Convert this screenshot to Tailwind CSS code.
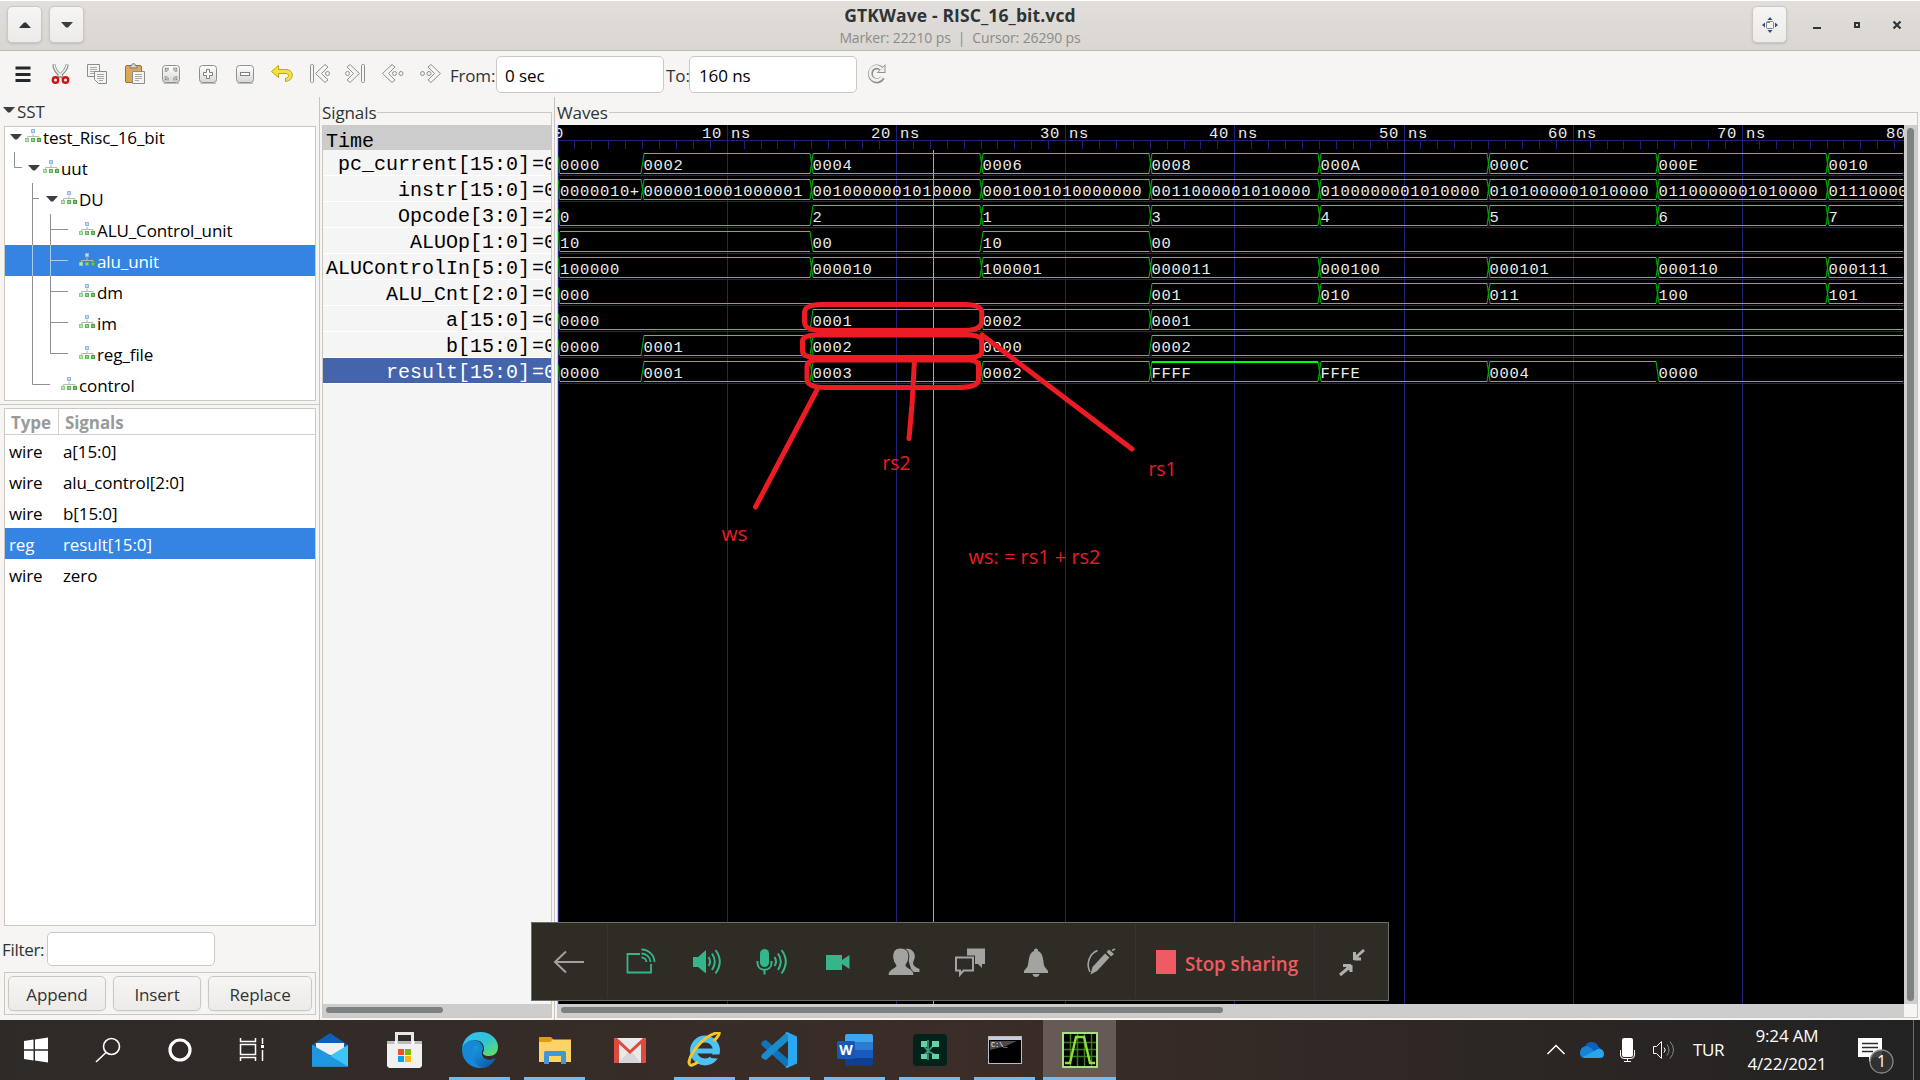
<!DOCTYPE html>
<html lang="en">
<head>
<meta charset="utf-8">
<title>GTKWave - RISC_16_bit.vcd</title>
<script src="https://cdn.jsdelivr.net/npm/@tailwindcss/browser@4"></script>
</head>
<body class="relative flex flex-col w-[1920px] h-[1080px] overflow-hidden bg-[#f6f5f3] text-[#2e3436] font-['Open_Sans','Noto_Sans',sans-serif] text-[17px] tracking-[-0.1px]">

<svg class="absolute" width="0" height="0">
  <defs>
    <linearGradient id="mt" x1="0" y1="0" x2="0" y2="1"><stop offset="0" stop-color="#fff"/><stop offset="1" stop-color="#d6d6d6"/></linearGradient>
    <linearGradient id="cloud" x1="0" y1="0" x2="1" y2="1"><stop offset="0" stop-color="#35c1f1"/><stop offset=".5" stop-color="#2fc3d8"/><stop offset="1" stop-color="#6be34f"/></linearGradient>
    <linearGradient id="deep" x1="0" y1="0" x2="1" y2="1"><stop offset="0" stop-color="#1b9de2"/><stop offset="1" stop-color="#0c4da2"/></linearGradient>
  </defs>
  <symbol id="hier" viewBox="0 0 16 14">
    <path d="M8 4.500V7M2.500 9V7.500H14V9" fill="none" stroke="#b8b8b8"/>
    <rect x="6" y="0" width="4" height="4" fill="#8fb9e8"/><rect x="7" y="1" width="2" height="2" fill="#c3dbf5"/>
    <rect x="0" y="9" width="4" height="4" fill="#8fcf85"/><rect x="1" y="10" width="2" height="2" fill="#b9e6b0"/>
    <rect x="6" y="9" width="4" height="4" fill="#5db654"/><rect x="7" y="10" width="2" height="2" fill="#93d68b"/>
    <rect x="12" y="9" width="4" height="4" fill="#4ba343"/><rect x="13" y="10" width="2" height="2" fill="#7cc775"/>
  </symbol>
  <symbol id="tri" viewBox="0 0 12 6"><path d="M0 0H12L7 5.500H5Z" fill="#3a3e40"/></symbol>
</svg>

<!-- title bar -->
<header class="flex h-[51px] shrink-0 items-start border-t border-b border-t-white border-b-[#bfb8b1] bg-linear-to-b from-[#e1dedb] to-[#dad6d2] pt-[5px] pl-[7px]">
  <div class="flex h-[37px] w-[35px] items-center justify-center rounded-[5px] border border-[#cdc7c2] bg-linear-to-b from-[#f6f5f4] to-[#edebe9] shadow-sm"><svg width="12" height="6" viewBox="0 0 12 6"><path d="M0 6H12L7 .500H5Z" fill="#2e3436"/></svg></div>
  <div class="ml-[7px] flex h-[37px] w-[35px] items-center justify-center rounded-[5px] border border-[#cdc7c2] bg-linear-to-b from-[#f6f5f4] to-[#edebe9] shadow-sm"><svg width="12" height="6"><use href="#tri"/></svg></div>
  <div class="-mt-[1px] flex-1 pl-[84px] text-center">
    <div class="text-[17.5px] leading-[20px] font-bold tracking-[0.12px]">GTKWave - RISC_16_bit.vcd</div>
    <div class="mt-[4px] text-[14px] leading-[18px] tracking-[-0.12px] text-[#8b8c8a]">Marker: 22210 ps&nbsp; |&nbsp; Cursor: 26290 ps</div>
  </div>
  <div class="flex h-[37px] w-[35px] items-center justify-center rounded-[5px] border border-[#cdc7c2] bg-linear-to-b from-[#f6f5f4] to-[#edebe9] shadow-sm">
    <svg width="16" height="16" viewBox="0 0 16 16"><path d="M8 0L10.500 3H5.500ZM8 16L5.500 13H10.500ZM0 8L3 5.500V10.500ZM16 8L13 10.500V5.500Z" fill="#27508f"/><rect x="4.500" y="4.500" width="7" height="7" rx="1" fill="#f2f2ef" stroke="#83847f"/><path d="M5 5.500h3" stroke="#83847f"/></svg>
  </div>
  <svg class="ml-[20px] h-[30px] w-[113px] shrink-0" viewBox="1807 6 113 30"><rect x="1813" y="27" width="8" height="2" fill="#2e3436"/><rect x="1855" y="23" width="4" height="4" fill="none" stroke="#2e3436" stroke-width="2"/><path d="M1893.500 21.500L1900.500 28.500M1900.500 21.500L1893.500 28.500" stroke="#2e3436" stroke-width="2.200"/></svg>
</header>

<!-- toolbar -->
<div class="flex h-[46px] shrink-0 items-center">
  <svg class="h-[46px] w-[450px] shrink-0" viewBox="0 51 450 46" fill="none">
    <path d="M15.500 68H30.500M15.500 74.500H30.500M15.500 80.500H30.500" stroke="#24282a" stroke-width="3"/>
    <g><path d="M54 64.500C54 69 58 74 62.500 77M67 64.500C67 69 62 74 58 77" stroke="#8b8d89" stroke-width="3.400"/><path d="M54.300 65C54.500 69 58 73.500 62 76M66.700 65C66.500 69 62 73.500 58.500 76" stroke="#eceeec" stroke-width="1.600"/><circle cx="55.500" cy="80" r="2.700" stroke="#cc1414" stroke-width="2.400"/><circle cx="65.500" cy="80" r="2.700" stroke="#cc1414" stroke-width="2.400"/></g>
    <g stroke="#8b8d89"><path d="M87.500 64.500H99.500V76.500H87.500Z" fill="#f4f4f2"/><path d="M90 67.500H97M90 69.500H97M90 71.500H97M90 73.500H94" stroke="#a9aaa6"/><path d="M94.500 71.500H106.500V83.500H98.500L94.500 79.500Z" fill="#f4f4f2"/><path d="M97 74.500H104M97 76.500H104M97 78.500H104M99 80.500H103" stroke="#a9aaa6"/></g>
    <g><rect x="125.500" y="65.500" width="16" height="17" rx="1.500" fill="#dda75a" stroke="#a56d26"/><path d="M130 68V65.500H131.500C131.500 63 135.500 63 135.500 65.500H137V68Z" fill="#d2d3d0" stroke="#75777a"/><path d="M132.500 71.500H144.500V83.500H132.500Z" fill="#f4f4f2" stroke="#8b8d89"/><path d="M135 74.500H142M135 76.500H142M135 78.500H142M135 80.500H139" stroke="#a9aaa6"/></g>
    <g fill="url(#mt)" stroke="#8f918d"><rect x="162.500" y="65.500" width="17" height="17" rx="3"/><rect x="199.500" y="65.500" width="17" height="17" rx="3"/><rect x="236.500" y="65.500" width="17" height="17" rx="3"/></g>
    <path d="M163.500 83.500H179M200.500 83.500H216M237.500 83.500H253" stroke="#bcbdb9"/>
    <path d="M166 72V69H169M173 69H176V72M176 76V79H173M169 79H166V76" stroke="#7e807c" stroke-width="2.400"/><path d="M166 72V69H169M173 69H176V72M176 76V79H173M169 79H166V76" stroke="#f5f5f5" stroke-width=".8"/>
    <path d="M206.500 69.500H209.500V72.500H212.500V75.500H209.500V78.500H206.500V75.500H203.500V72.500H206.500Z" fill="#fbfbfb" stroke="#7e807c"/>
    <rect x="240.500" y="72.500" width="9" height="3" fill="#fbfbfb" stroke="#7e807c"/>
    <path d="M271.500 71.500L278.500 65.500V69.500H286C294 69.500 295 80.500 285.500 81.500V78.500C290 77.500 289 73.500 286 73.500H278.500V77.500Z" fill="#f4e14a" stroke="#c0a21b"/>
    <g stroke="#8f918d" fill="#f5f5f4">
      <rect x="310.500" y="64.500" width="3" height="18" rx="1"/><path d="M315.500 73.500L325 64.500L328 67L321.500 73.500L328 80L325 82.500Z"/><circle cx="327.500" cy="73.500" r="2"/>
      <circle cx="347.500" cy="73.500" r="2"/><path d="M359.500 73.500L350 64.500L347 67L353.500 73.500L347 80L350 82.500Z"/><rect x="361.500" y="64.500" width="3" height="18" rx="1"/>
      <path d="M382.500 73.500L392 64.500L395 67L388.500 73.500L395 80L392 82.500Z"/><circle cx="394.500" cy="73.500" r="2"/><circle cx="401" cy="73.500" r="2"/>
      <circle cx="422.500" cy="73.500" r="2"/><circle cx="429" cy="73.500" r="2"/><path d="M440.500 73.500L431 64.500L428 67L434.500 73.500L428 80L431 82.500Z"/>
    </g>
  </svg>
  <span class="w-[46px] pt-[3px] tracking-[-0.2px]">From:</span>
  <div class="flex h-[37px] w-[168px] items-center rounded-[5px] border border-[#cdc7c2] bg-white pl-2 pt-[3px] text-black">0 sec</div>
  <span class="w-[25px] pl-[2px] pt-[3px]">To:</span>
  <div class="flex h-[37px] w-[168px] items-center rounded-[5px] border border-[#cdc7c2] bg-white pl-[9px] pt-[3px] text-black">160 ns</div>
  <svg class="ml-[9px]" width="22" height="22" viewBox="0 0 22 22"><path d="M16.500 14.500A6.500 7 0 1 1 15 5.500" fill="none" stroke="#8f918d" stroke-width="5"/><path d="M19.500 1V10H10.500L13.500 7" fill="#8f918d"/><path d="M16 14A6.500 7 0 1 1 15.500 6" fill="none" stroke="#f1f1f0" stroke-width="2.800"/><path d="M18.500 3V9H12.500Z" fill="#f1f1f0"/></svg>
</div>

<!-- panes -->
<main class="flex h-[923px] shrink-0">
  <!-- SST pane -->
  <section class="flex w-[320px] shrink-0 flex-col border-r border-[#c9c3be]">
    <div class="flex h-[29px] items-center pl-[3px]"><svg class="mt-[-3px]" width="12" height="6"><use href="#tri"/></svg><span class="ml-[2px]">SST</span></div>
    <div class="relative ml-[4px] h-[275px] w-[312px] overflow-hidden border border-[#cdc7c2] bg-white text-black">
      <div id="tree" class="-mt-[6px]"></div>
      <svg class="absolute inset-0" width="310" height="273" viewBox="5 127 310 273" fill="none" stroke="#8f9090"><path d="M14.500 152V167.500H22M32.500 183V384.500H50M32.500 198.500H39M50.500 214V353.500H68M50.500 229.500H68M50.500 291.500H68M50.500 322.500H68"/><path d="M32.500 245V276M50.500 245V276M50.500 260.500H68" stroke="#a8cbf4"/></svg>
    </div>
    <div class="mt-[3px] h-px bg-[#cdc7c2]"></div>
    <div class="mt-[3px] ml-[4px] h-[518px] w-[312px] border border-[#cdc7c2] bg-white text-black">
      <div class="flex h-[26px] items-center border-b border-[#d5d0cc] text-[17px] font-bold text-[#999b9b]"><span class="flex h-full w-[54px] items-center border-r border-[#d5d0cc] pt-[3px] pl-[6px]">Type</span><span class="pl-[6px] pt-[3px]">Signals</span></div>
      <div id="vars"></div>
    </div>
    <div class="mt-[6px] flex h-[34px] items-center"><span class="w-[47px] pl-[2px] pt-[1px] tracking-[-0.3px]">Filter:</span><div class="h-full w-[168px] rounded-[5px] border border-[#cdc7c2] bg-white"></div></div>
    <div class="mt-[6px] ml-[4px] flex h-[43px] w-[312px] gap-[7px] border border-[#cdc7c2] px-[3px] pt-[3px]">
      <div class="flex h-[35px] w-[98px] items-center justify-center rounded-[5px] border border-[#cdc7c2] bg-linear-to-b from-[#f6f5f4] to-[#edebe9] pt-[2px] shadow-xs">Append</div>
      <div class="flex h-[35px] w-[88px] items-center justify-center rounded-[5px] border border-[#cdc7c2] bg-linear-to-b from-[#f6f5f4] to-[#edebe9] pt-[2px] shadow-xs">Insert</div>
      <div class="flex h-[35px] w-[104px] items-center justify-center rounded-[5px] border border-[#cdc7c2] bg-linear-to-b from-[#f6f5f4] to-[#edebe9] pt-[2px] shadow-xs">Replace</div>
    </div>
  </section>

  <!-- signal names -->
  <section class="flex w-[235px] shrink-0 flex-col border-r border-[#c9c3be] pl-[2px]">
    <div class="flex h-[28px] w-[230px] items-start"><span class="mt-[5px] leading-[22px]">Signals</span><div class="mt-[15px] ml-[1px] h-[13px] flex-1 border-t border-r border-[#cdc7c2]"></div></div>
    <div class="flex h-[893px] w-[230px] flex-col overflow-hidden border-x border-b border-[#cdc7c2] bg-[#f5f5f5] font-['Liberation_Mono',monospace] text-[20px] tracking-normal text-black">
      <div class="h-[25px] bg-[#cccccc] pl-[3px] leading-[34px]">Time</div>
      <div id="names"></div>
      <div class="mt-auto h-[13px] shrink-0 bg-[#cdcdcd] pt-[3px] pl-[3px]"><div class="h-[6px] w-[117px] rounded-full bg-[#7e8182]"></div></div>
    </div>
  </section>

  <!-- waves -->
  <section class="flex w-[1365px] flex-col pl-[2px]">
    <div class="flex h-[28px] w-[1361px] items-start"><span class="mt-[5px] leading-[22px]">Waves</span><div class="mt-[15px] ml-[1px] h-[13px] flex-1 border-t border-r border-[#cdc7c2]"></div></div>
    <div class="flex h-[879px] w-[1361px] border-x border-[#cdc7c2]">
      <svg id="wave" class="shrink-0 bg-black" width="1346" height="879" viewBox="558 125 1346 879"></svg>
      <div class="flex-1 bg-[#cdcdcd] pt-[3px] pl-[3px]"><div class="h-[873px] w-[7px] rounded-full bg-[#7e8182]"></div></div>
    </div>
    <div class="h-[14px] w-[1361px] border-x border-b border-[#cdc7c2]"><div class="h-[13px] w-[1346px] bg-[#cdcdcd] pt-[3px] pl-[3px]"><div class="h-[6px] w-[662px] rounded-full bg-[#7e8182]"></div></div></div>
  </section>
</main>

<!-- screen-share controls floating over the window -->
<div class="absolute top-[922px] left-[531px] flex h-[79px] w-[858px] items-stretch border border-[#6f6d68] bg-[#2f2c26]">
  <svg class="h-[76px] w-[783px] shrink-0" viewBox="532 923 783 76" fill="none">
    <path d="M607.500 924V998M1135.500 924V998M1314.500 924V998" stroke="#37342f"/>
    <path d="M584 962H555M566 951.500L555 962L566 972.500" stroke="#a3a19d" stroke-width="2"/>
    <g stroke="#35b58c" stroke-width="1.800"><path d="M640 954H627.500V972.500H651V964"/><path d="M641.500 957.500A5 5 0 0 1 646.500 962M641.500 953.500A9 9 0 0 1 650.500 962M641.500 949.500A13 13 0 0 1 654.500 962"/></g>
    <path d="M693 957H698L706 950V973.500L698 967H693Z" fill="#35b58c"/><path d="M708.500 957Q711.500 961.500 708.500 966M712 953.500Q717.500 961.500 712 970M715.500 950Q724 961.500 715.500 973.500" stroke="#35b58c" stroke-width="2"/>
    <rect x="760" y="949" width="9" height="18" rx="4.500" fill="#35b58c"/><path d="M757.500 961V963C757.500 972 771.500 972 771.500 963V961M764.500 969V974.500" stroke="#35b58c" stroke-width="2"/><path d="M774.500 957Q777.500 961.500 774.500 966M778 953.500Q783.500 961.500 778 970M781.500 950Q790 961.500 781.500 973.500" stroke="#35b58c" stroke-width="2"/>
    <path d="M826 955H842V960L849.500 955V969L842 964V970H826Z" fill="#35b58c"/>
    <path d="M905 949C912 947 917 954 914 960C912 964 913 966 919.500 969V972H912Z" fill="#a3a3a2"/><path d="M900.500 948C908 948 909.500 954 908.500 959C908 963 905.500 964 906 966C907 968 914 969 914 975.500H888C888 969 895.500 968 896 966C896 964 893.500 963 893 959C892 954 893.500 948 900.500 948Z" fill="#a3a3a2" stroke="#2f2c26"/>
    <path d="M967 948.500H985V964H982V968L978 964H967Z" fill="#a3a3a2"/><path d="M955.500 957.500H973V970.500H963.500L960 974.500V970.500H955.500Z" fill="#2f2c26" stroke="#2f2c26" stroke-width="4"/><path d="M956 957.500H973V970.500H963.500L960 974.500V970.500H956Z" fill="#2f2c26" stroke="#a3a3a2" stroke-width="2"/>
    <path d="M1036 948.500C1037.500 948.500 1038 949.500 1038 951C1044 953 1043 963 1044.500 966.500L1048 971V973H1024V971L1027.500 966.500C1029 963 1028 953 1034 951C1034 949.500 1034.500 948.500 1036 948.500ZM1032.500 974H1039.500C1039 978 1033 978 1032.500 974Z" fill="#a3a3a2"/>
    <path d="M1097.500 950.500C1089 954 1086 964 1090 972" stroke="#a3a3a2" stroke-width="1.600"/><path d="M1090.500 974.500L1092.500 967L1105 953.500L1109.500 957.500L1097 971Z" fill="#a3a3a2"/><path d="M1106.500 952L1109 949.500L1114 954L1111 956.500Z" fill="#a3a3a2"/><path d="M1112 950.500L1115 949" stroke="#a3a3a2" stroke-width="1.500"/>
    <rect x="1156" y="950" width="20" height="24" fill="#ef5b62"/>
    <text x="1185" y="970.500" textLength="113" lengthAdjust="spacingAndGlyphs" font-size="19" font-weight="600" fill="#ef5b62" letter-spacing="0">Stop sharing</text>
  </svg>
  <svg class="h-[76px] flex-1" viewBox="1315 923 73 76"><g fill="#b0afac" stroke="#b0afac" stroke-width="3"><path d="M1354.500 960V952M1354.500 959H1361M1355 958L1364 950" fill="none"/><path d="M1354 960V953L1361 960Z" stroke="none"/><path d="M1351 965V972M1351 965.500H1343M1350 966.500L1340 975" fill="none"/><path d="M1351 964V972L1343 964Z" stroke="none"/></g></svg>
</div>

<!-- taskbar -->
<footer class="flex h-[60px] shrink-0 items-stretch bg-linear-to-r from-[#2d2a28] via-[#3b2d27] to-[#222222] text-white">
  <svg class="w-[292px] shrink-0" viewBox="0 1020 292 60" fill="none" stroke="#fff">
    <path d="M24 1041L33.500 1039.600V1049.300H24ZM35 1039.400L48 1037.500V1049.300H35ZM24 1050.700H33.500V1060.400L24 1059ZM35 1050.700H48V1062.500L35 1060.600Z" fill="#fff" stroke="none"/>
    <circle cx="111.500" cy="1046.500" r="8" stroke-width="1.600"/><path d="M106 1052.500L96 1062" stroke-width="1.600"/>
    <circle cx="180" cy="1050" r="10" stroke-width="3.200"/>
    <path d="M240.500 1038V1041.500H255.500V1038M240.500 1061V1057.500H255.500V1061M240.500 1044.500H255.500V1054.500H240.500ZM262.500 1038V1044M262.500 1050V1061" stroke-width="1.500"/><rect x="261" y="1045" width="3" height="3" fill="#fff" stroke="none"/>
  </svg>
  <div id="apps" class="flex shrink-0">
    <div class="flex w-[75px] items-center justify-center"><svg width="36" height="34" viewBox="0 0 36 34"><path d="M0 12L18 0L36 12V20H0Z" fill="#0f5fb5"/><path d="M4 10H32V22H4Z" fill="#f0f0f0"/><path d="M0 12L18 22L0 33Z" fill="#27a3e6"/><path d="M36 12L0 33.500H36Z" fill="#3cc5f5"/><path d="M0 12L36 33.500H0Z" fill="#1f96e0"/></svg></div>
    <div class="flex w-[75px] items-center justify-center"><svg width="36" height="36" viewBox="0 0 36 36"><path d="M9.500 12V1.500H25.500V12" fill="none" stroke="#e8e8e8" stroke-width="3"/><path d="M0 9H35V34L33 36H2L0 34Z" fill="#f1f1f1"/><path d="M0 9H35V12H0Z" fill="#bdbdbd"/><path d="M9 9V12M26 9V12" stroke="#fff" stroke-width="3"/><rect x="11" y="17" width="6" height="6" fill="#f25022"/><rect x="18" y="17" width="6" height="6" fill="#7fba00"/><rect x="11" y="24" width="6" height="6" fill="#00a4ef"/><rect x="18" y="24" width="6" height="6" fill="#ffb900"/></svg></div>
    <div class="relative flex w-[75px] items-center justify-center"><svg width="36" height="36" viewBox="0 0 36 36"><path d="M0 18C0 12 5 8 11 8C18 8 21 13 21 17C18 22 21 28 27 28C30 28 32 27 33.500 26.500C30 32 25 36 18 36C8 36 0 28 0 18Z" fill="#1688d8"/><path d="M13 14C8 20 10 32 20 36C26 36 31 31 33.500 26.500C27 30 16 27 17 18C17 16 15 13 13 14Z" fill="url(#deep)"/><path d="M0 17C1 6 9 0 18 0C30 0 36 8 36 15C36 21 32 24 27 24C22 24 20.500 22 21 20.500C23 18 23 8 12 8C6 8 1 12 0 17Z" fill="url(#cloud)"/></svg><i class="absolute bottom-0 left-[7px] h-[3px] w-[61px] bg-[#76b9ed]"></i></div>
    <div class="relative flex w-[75px] items-center justify-center"><svg width="32" height="28" viewBox="0 0 32 28"><path d="M0 1H12L15 4H30V10H0Z" fill="#e39b0a"/><path d="M0 6H11L14 3.500H32V26H0Z" fill="#fdd266"/><path d="M5 28V17C5 15.500 6 15 7 15H25C26 15 27 15.500 27 17V28H22V20H10V28Z" fill="#3e97db"/></svg><i class="absolute bottom-0 left-[7px] h-[3px] w-[61px] bg-[#76b9ed]"></i></div>
    <div class="flex w-[75px] items-center justify-center"><svg width="32" height="25" viewBox="0 0 32 25"><rect width="32" height="25" rx="2" fill="#e9e9e9"/><path d="M5 25L16 12L27 25Z" fill="#d6d6d6"/><path d="M0 2C0 0 2 0 3 0L16 12L29 0C30 0 32 0 32 2V23C32 25 31 25 27 25V6L16 16L5 6V25C1 25 0 25 0 23Z" fill="#dd4b3e"/></svg></div>
    <div class="relative flex w-[75px] items-center justify-center"><svg width="36" height="36" viewBox="0 0 36 36"><circle cx="18" cy="18.500" r="11.500" fill="none" stroke="#4cc3f3" stroke-width="7"/><path d="M9 19H32" stroke="#4cc3f3" stroke-width="5"/><path d="M22 22.500H36V27L24 26Z" fill="#372c28"/><path d="M27 9C36 -1 33 -1 24 3C14 8 3 22 2 30C2 36 8 32 11 30" fill="none" stroke="#f6c72b" stroke-width="3"/></svg><i class="absolute bottom-0 left-[7px] h-[3px] w-[61px] bg-[#76b9ed]"></i></div>
    <div class="relative flex w-[75px] items-center justify-center"><svg width="37" height="36" viewBox="0 0 37 36"><path d="M2 9L5 8L28 28V35L26 36L1 13.500C0 12 0 10.500 2 9Z" fill="#1075b8"/><path d="M2 27L5 28L28 8V1L26 0L1 22.500C0 24 0 25.500 2 27Z" fill="#1b8bd0"/><path d="M26 0L36 4.500V31.500L26 36L24 35L27 33V3L24 1Z" fill="#2aa7f0"/></svg><i class="absolute bottom-0 left-[7px] h-[3px] w-[61px] bg-[#76b9ed]"></i></div>
    <div class="relative flex w-[75px] items-center justify-center"><svg width="36" height="32" viewBox="0 0 36 32"><path d="M8 2Q8 0 10 0H34Q36 0 36 2V8H8Z" fill="#41a5ee"/><path d="M8 8H36V16H8Z" fill="#2b7cd3"/><path d="M8 16H36V24H8Z" fill="#185abd"/><path d="M8 24H36V30Q36 32 34 32H10Q8 32 8 30Z" fill="#103f91"/><rect y="7" width="18" height="18" rx="1.500" fill="#1857b5"/><text x="9" y="21" text-anchor="middle" font-size="14" font-weight="700" fill="#fff">W</text></svg><i class="absolute bottom-0 left-[7px] h-[3px] w-[61px] bg-[#76b9ed]"></i></div>
    <div class="relative flex w-[75px] items-center justify-center"><svg width="34" height="32" viewBox="0 0 34 32"><rect width="34" height="32" rx="4" fill="#03231a"/><path d="M15 17L9 10M15 17L23 9M15 17L9 23M15 17L24 22M15 6V26" stroke="#3f9c7c" stroke-width="1.600"/><path d="M8 7H14V13H8ZM19 7H26V13H19ZM8 20H14V25H8ZM19 20H26V25H19Z" fill="#62d3a8"/></svg><i class="absolute bottom-0 left-[7px] h-[3px] w-[61px] bg-[#76b9ed]"></i></div>
    <div class="relative flex w-[75px] items-center justify-center"><svg width="34" height="28" viewBox="0 0 34 28"><rect x=".5" y=".5" width="33" height="27" fill="#000" stroke="#b7bcc9"/><path d="M1 1H33V4H1Z" fill="#c9cdd7"/><path d="M2 5H29L18 10L2 14Z" fill="#4a4a4a"/><text x="3" y="11" font-size="7" fill="#fff" font-family="Liberation Mono">C:\_</text></svg><i class="absolute bottom-0 left-[7px] h-[3px] w-[61px] bg-[#76b9ed]"></i></div>
    <div class="relative ml-[1px] flex w-[73px] items-center justify-center bg-[#655a56]"><svg width="36" height="36" viewBox="0 0 36 36"><rect x="1" y="1" width="34" height="34" fill="#000" stroke="#a9e080" stroke-width="2"/><path d="M8.500 2V34M15.500 2V34M22.500 2V34M29.500 2V34M2 10.500H34M2 17.500H34M2 24.500H34" stroke="#3f7a18" stroke-width="1.500"/><path d="M3 31H8L14 5H22L28 31H33" fill="none" stroke="#8ae234" stroke-width="2.400"/></svg><i class="absolute bottom-0 left-0 h-[3px] w-[73px] bg-[#76b9ed]"></i></div>
  </div>
  <div class="flex-1"></div>
  <svg class="w-[150px] shrink-0" viewBox="1540 1020 150 60" fill="none" stroke="#fff">
    <path d="M1547.500 1054L1556 1045.500L1564.500 1054" stroke-width="1.500"/>
    <g stroke="none"><path d="M1585 1048C1585 1041 1596 1040 1598 1046L1603 1052H1583Z" fill="#0a62b8"/><path d="M1580 1053C1580 1047 1586 1044 1591 1048L1600 1058H1584C1581 1058 1580 1055 1580 1053Z" fill="#1583d8"/><path d="M1583 1057L1596 1050C1600 1047 1604 1050 1604 1054C1604 1057 1602 1058 1600 1058H1585Z" fill="#28a4ea"/><rect x="1622" y="1038" width="11" height="19" rx="2" fill="#fff"/></g>
    <path d="M1620.500 1050V1055Q1620.500 1058.500 1624 1058.500H1631Q1634.500 1058.500 1634.500 1055V1050M1627.500 1059V1062M1624 1061.500H1631"/>
    <path d="M1653.500 1046.500H1656.500L1661.500 1041.500V1058.500L1656.500 1053.500H1653.500Z"/><path d="M1664 1047.500Q1666.500 1050 1664 1052.500"/><path d="M1667 1044.500Q1671 1050 1667 1055.500M1670 1041.500Q1677 1050 1670 1058.500" stroke="#888"/>
  </svg>
  <div class="w-[40px] shrink-0 self-center pl-[3px] text-[17px] tracking-[-0.4px]">TUR</div>
  <div class="flex w-[114px] flex-col justify-center text-center text-[17px] leading-[28px] tracking-[-0.15px]"><span>9:24 AM</span><span>4/22/2021</span></div>
  <svg class="w-[76px] shrink-0" viewBox="1844 1020 76 60"><path d="M1858 1038H1882V1057H1874L1869 1062V1057H1858Z" fill="#fff"/><path d="M1862 1043.500H1878M1862 1047.500H1878M1862 1051.500H1873" stroke="#2b2b2b" stroke-width="1.500"/><circle cx="1881.500" cy="1061.500" r="11.500" fill="#333" fill-opacity=".9" stroke="#8a8a8a" stroke-width="1.300"/><text x="1881.500" y="1067" text-anchor="middle" font-size="16" fill="#fff">1</text><path d="M1913.500 1020V1080" stroke="#6b6b6b"/></svg>
</footer>

<script>
const tree = [[0,'test_Risc_16_bit',1],[1,'uut',1],[2,'DU',1],[3,'ALU_Control_unit'],[3,'alu_unit'],[3,'dm'],[3,'im'],[3,'reg_file'],[2,'control']];
document.getElementById('tree').innerHTML = tree.map(([d, n, open], i) =>
  `<div class="flex h-[31px] items-center ${i === 4 ? 'bg-[#3584e4] text-white' : ''}" style="padding-left:${5 + d * 18}px"><span class="w-[15px]">${open ? '<svg width="12" height="6"><use href="#tri"/></svg>' : ''}</span><svg class="-mt-[2px]" width="16" height="14"><use href="#hier"/></svg><span class="ml-[2px] pt-[2px]">${n}</span></div>`).join('');

const vars = [['wire','a[15:0]'],['wire','alu_control[2:0]'],['wire','b[15:0]'],['reg','result[15:0]'],['wire','zero']];
document.getElementById('vars').innerHTML = vars.map(([t, n], i) =>
  `<div class="flex h-[31px] items-center pl-[4px] pt-[2px] ${i === 3 ? 'bg-[#3584e4] text-white' : ''}"><span class="w-[54px]">${t}</span><span>${n}</span></div>`).join('');

// signal name, displayed value, then [start in ns, label] segments
const sig = [
  ['pc_current[15:0]','0',[[0,'0000'],[5,'0002'],[15,'0004'],[25,'0006'],[35,'0008'],[45,'000A'],[55,'000C'],[65,'000E'],[75,'0010']]],
  ['instr[15:0]','0',[[0,'0000010+'],[5,'0000010001000001'],[15,'0010000001010000'],[25,'0001001010000000'],[35,'0011000001010000'],[45,'0100000001010000'],[55,'0101000001010000'],[65,'0110000001010000'],[75,'0111000001010000']]],
  ['Opcode[3:0]','2',[[0,'0'],[15,'2'],[25,'1'],[35,'3'],[45,'4'],[55,'5'],[65,'6'],[75,'7']]],
  ['ALUOp[1:0]','0',[[0,'10'],[15,'00'],[25,'10'],[35,'00']]],
  ['ALUControlIn[5:0]','0',[[0,'100000'],[15,'000010'],[25,'100001'],[35,'000011'],[45,'000100'],[55,'000101'],[65,'000110'],[75,'000111']]],
  ['ALU_Cnt[2:0]','0',[[0,'000'],[35,'001'],[45,'010'],[55,'011'],[65,'100'],[75,'101']]],
  ['a[15:0]','0',[[0,'0000'],[15,'0001'],[25,'0002'],[35,'0001']]],
  ['b[15:0]','0',[[0,'0000'],[5,'0001'],[15,'0002'],[25,'0000'],[35,'0002']]],
  ['result[15:0]','0',[[0,'0000'],[5,'0001'],[15,'0003'],[25,'0002'],[35,'FFFF'],[45,'FFFE'],[55,'0004'],[65,'0000']]],
];
document.getElementById('names').innerHTML = sig.map(([n, v], i) =>
  `<div class="flex h-[26px] border-b border-white whitespace-pre leading-[30px] ${i === 8 ? 'bg-[#4464ac] text-white' : ''}"><span class="w-[207px] shrink-0 text-right">${n}</span><span class="ml-[2px]">=${v}</span></div>`).join('');

const X = t => Math.floor(558 + t * 16.92);
let s = '', blue = '';
for (let t = 0; t <= 79; t++) {
  const x = X(t) + .5;
  blue += t % 10 ? `M${x} 141V149` : `M${x} 125V1004`;
}
blue += 'M558 140.5H1904';
sig.forEach((_, r) => { blue += `M558 ${175.5 + r * 26}H1904`; });
s += `<path d="${blue}" stroke="#20207c" fill="none"/>`;
let bright = '', dark = '', thick = '', txt = '';
sig.forEach(([, , segs], r) => {
  const T = 153.5 + r * 26, B = 173.5 + r * 26;
  let prevTop = false;
  segs.forEach(([t, v], k) => {
    const x = X(t) + .5, last = k === segs.length - 1, x1 = last ? 1903 : X(segs[k + 1][0]) - 1;
    const top = /[^0]/.test(v);
    if (k === 0) dark += `M${x} ${top ? T : T + 4}L${x + 1} ${B}`;
    else {
      if (prevTop) dark += `M${x - 1.5} ${T}L${x + 1.5} ${B}`;
      if (top) dark += `M${x - 1.5} ${B}L${x + 1.5} ${T}`;
    }
    bright += `M${x + 1.5} ${B}H${x1}`;
    if (top) { if (v === 'FFFF') thick += `M${x + 1.5} ${T + .5}H${x1}`; else bright += `M${x + 1.5} ${T}H${x1}`; }
    txt += `<text x="${x + (k ? 1 : 1.5)}" y="${170 + r * 26}">${v}</text>`;
    prevTop = top;
  });
});
s += `<path d="${dark}" stroke="#00a000" stroke-width="1.2" fill="none"/><path d="${bright}" stroke="#00ff00" fill="none"/><path d="${thick}" stroke="#00ff00" stroke-width="2" fill="none"/>`;
txt += '<text x="554" y="138">0</text>';
for (let t = 10; t <= 80; t += 10) txt += `<text x="${X(t) - 25}" y="138">${t}</text><text x="${X(t) + 4}" y="138">ns</text>`;
s += `<g fill="#ececec" font-family="'Liberation Mono',monospace" font-size="15.5" letter-spacing=".68">${txt}</g>`;
s += '<path d="M933.5 150V1004" stroke="#ff8080"/>';
s += `<g fill="none" stroke="#ed1c24" stroke-width="5" stroke-linejoin="round" stroke-linecap="round">
<path d="M821 304.500H965Q981.700 305 981.700 312V322Q981 330 965 330.500H821Q804.500 330 804.500 322V312Q805 305 821 304.500Z"/>
<path d="M816 335H970Q981.700 336 981.700 341V352Q981 357.500 968 357.500H818Q802.500 357.500 802.500 351V341Q803 335.500 816 335Z"/>
<path d="M815 360H970Q978.500 361 978.500 366V380Q978 387.500 957 387.500H826Q807 387.500 807 379V366Q807.500 361 815 360Z"/>
<path d="M824 332.500H961"/><path d="M818 388L755.500 507M914.500 360L912 405L909 438.500M982 335L1132 449"/></g>`;
s += `<g fill="#ed1c24" font-size="19.5" font-weight="500" letter-spacing="0">
<text x="882.500" y="470" textLength="28" lengthAdjust="spacingAndGlyphs">rs2</text><text x="1148.500" y="476" textLength="28" lengthAdjust="spacingAndGlyphs">rs1</text><text x="721.500" y="541" textLength="26" lengthAdjust="spacingAndGlyphs">ws</text><text x="968.500" y="564" textLength="132" lengthAdjust="spacingAndGlyphs">ws: = rs1 + rs2</text></g>`;
document.getElementById('wave').innerHTML = s;
</script>
</body>
</html>
